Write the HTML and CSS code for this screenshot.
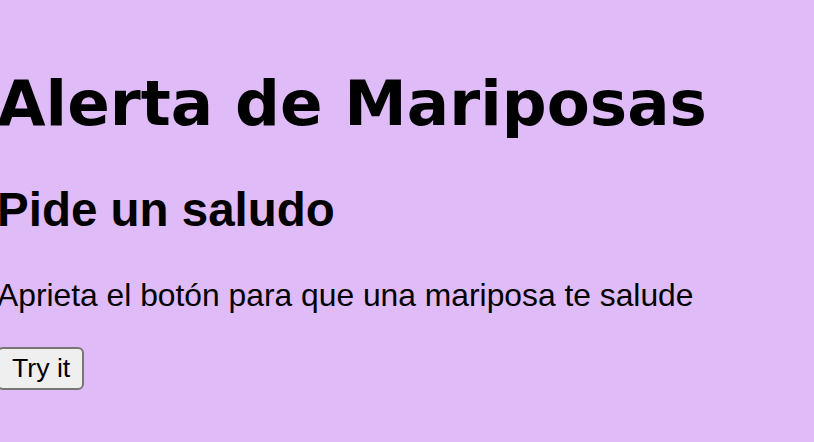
FILE: index.html
```html
<!DOCTYPE html>
<html lang="es">
<head>
<meta charset="utf-8">
<title>Alerta de Mariposas</title>
<link rel="stylesheet" href="styles.css">
</head>
<body>
<main class="page">
  <h1 class="title">Alerta de Mariposas</h1>
  <h2 class="subtitle">Pide un saludo</h2>
  <p class="text">Aprieta el botón para que una mariposa te salude</p>
  <button class="btn" type="button">Try it</button>
</main>
</body>
</html>
```

FILE: styles.css
```css
html, body {
  margin: 0;
  padding: 0;
  background: #dfbbf7;
}
.page {
  margin-left: -3px;
  padding-top: 1px;
  font-family: "Liberation Sans", Arial, sans-serif;
  color: #000;
}
.title {
  font-family: "DejaVu Sans", Verdana, sans-serif;
  font-weight: bold;
  font-size: 62.8px;
  margin: 66px 0 42px 0;
}
.subtitle {
  font-size: 47.5px;
  font-weight: bold;
  margin: 42px 0 40px 0;
}
.text {
  font-size: 31.8px;
  margin: 40px 0 33px 0;
}
.btn {
  font-family: "Liberation Sans", Arial, sans-serif;
  font-size: 26.67px;
  margin: 0;
  padding: 4px 12px 4px 13px;
  background: #efefef;
  border: 2px solid #767676;
  border-radius: 6px;
  color: #000;
}
```
